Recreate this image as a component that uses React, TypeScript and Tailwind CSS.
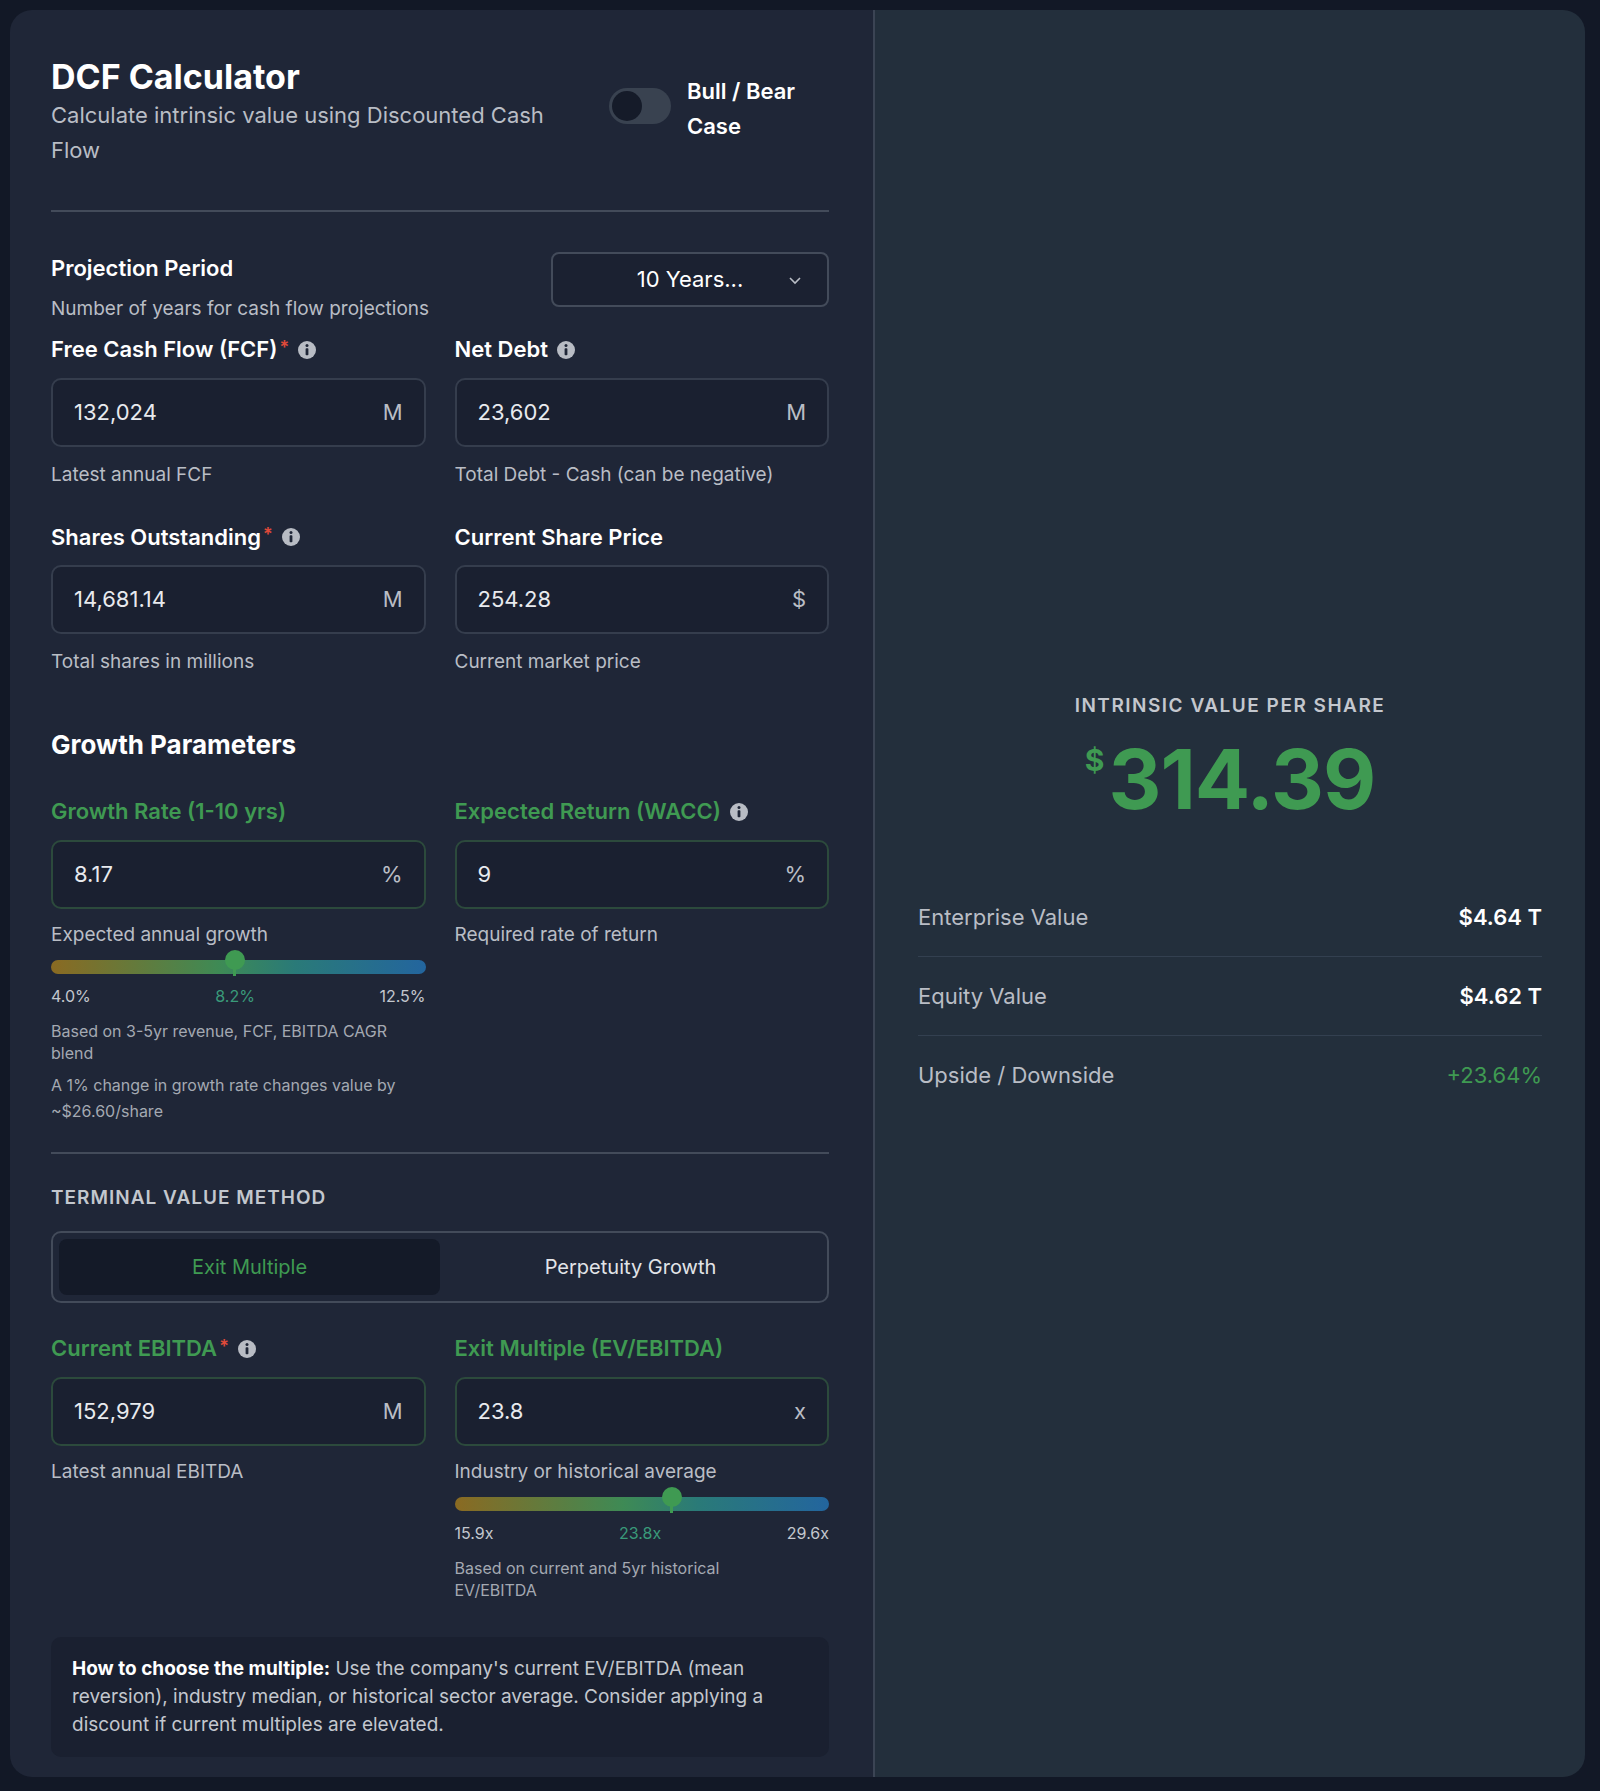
import React from "react";

const Info = () => (
  <svg width="20" height="20" viewBox="0 0 20 20" className="inline-block">
    <circle cx="10" cy="10" r="9" fill="#b8bcc4" />
    <circle cx="10" cy="5.6" r="1.5" fill="#1f2637" />
    <rect x="8.6" y="8.3" width="2.8" height="7" rx="0.8" fill="#1f2637" />
  </svg>
);

const Input = ({ v, u, green }: { v: string; u: string; green?: boolean }) => (
  <div
    className={`h-[69px] rounded-[10px] border-2 ${green ? "border-[#2c4a3c]" : "border-[#353d4d]"} bg-[#1a2030] flex items-center justify-between px-[21px] text-[22px] text-[#e8eaee]`}
  >
    <span>{v}</span>
    <span className="text-[#b9bdc5]">{u}</span>
  </div>
);

const Label = ({ children, green }: { children: React.ReactNode; green?: boolean }) => (
  <div className={`flex items-center gap-2 text-[22px] font-semibold h-[36px] ${green ? "text-[#3f9a52]" : "text-white"}`}>{children}</div>
);

const Req = () => <span className="text-[#e04a3a] -ml-1.5 self-start mt-0.5 text-[18px]">*</span>;

const Slider = ({ pos, a, b, c }: { pos: number; a: string; b: string; c: string }) => (
  <div className="mt-[11px]">
    <div className="relative h-[14px] rounded-full bg-[linear-gradient(90deg,#8a6a22,#3e8a55_45%,#2a7a78_65%,#23659e)]">
      <div className="absolute top-[-10px] w-[20px] h-[20px] -ml-[10px] rounded-full bg-[#3f9a52]" style={{ left: `${pos}%` }} />
      <div className="absolute top-[6px] w-[3px] h-[10px] -ml-[1.5px] bg-[#3f9a52]" style={{ left: `${pos}%` }} />
    </div>
    <div className="flex justify-between text-[16px] mt-[10px] text-[#c3c7ce]">
      <span>{a}</span>
      <span className="text-[#3a9a7a]">{b}</span>
      <span>{c}</span>
    </div>
  </div>
);

export default function App() {
  return (
    <div className="min-h-[1791px] bg-[#121826] p-[10px] pr-[15px] font-[family-name:Inter,sans-serif]">
      <div className="flex rounded-[22px] overflow-hidden h-[1767px]">
        <div className="w-[865px] bg-[#1f2637] pl-[41px] pr-[44px] pt-[46px] border-r-2 border-[#3b4454]">
          <div className="flex justify-between">
            <div className="w-[545px]">
              <h1 className="text-[34px] font-bold text-white leading-[42px]">DCF Calculator</h1>
              <p className="text-[22px] text-[#b9bdc5] leading-[35px] w-[535px]">Calculate intrinsic value using Discounted Cash<br />Flow</p>
            </div>
            <div className="flex items-start gap-4 w-[220px] mt-[30px]">
              <div className="w-[62px] h-[36px] rounded-full bg-[#394250] flex items-center px-[3px] mt-[2px] shrink-0">
                <div className="w-[30px] h-[30px] rounded-full bg-[#151b29]" />
              </div>
              <span className="text-[22px] font-semibold text-white leading-[35px] -mt-[12px]">Bull / Bear<br />Case</span>
            </div>
          </div>
          <div className="h-[2px] bg-[#434b5a] mt-[42px]" />
          <div className="flex justify-between mt-[40px]">
            <div>
              <div className="text-[22px] font-semibold text-white">Projection Period</div>
              <div className="text-[19px] text-[#b9bdc5] mt-[10px]">Number of years for cash flow projections</div>
            </div>
            <div className="w-[278px] h-[55px] rounded-[8px] border-2 border-[#434b5a] bg-[#1b2131] flex items-center justify-center relative text-[22px] text-white">
              10 Years...
              <svg className="absolute right-[24px]" width="16" height="16" viewBox="0 0 16 16" fill="none" stroke="#b9bdc5" strokeWidth="1.6"><path d="M3 6l5 5 5-5" /></svg>
            </div>
          </div>
          <div className="grid grid-cols-2 gap-x-[29px] mt-[8px]">
            <div>
              <Label>Free Cash Flow (FCF)<Req /><Info /></Label>
              <div className="mt-[10px]"><Input v="132,024" u="M" /></div>
              <div className="text-[19px] text-[#b9bdc5] mt-[14px]">Latest annual FCF</div>
            </div>
            <div>
              <Label>Net Debt<Info /></Label>
              <div className="mt-[10px]"><Input v="23,602" u="M" /></div>
              <div className="text-[19px] text-[#b9bdc5] mt-[14px]">Total Debt - Cash (can be negative)</div>
            </div>
            <div className="mt-[30px]">
              <Label>Shares Outstanding<Req /><Info /></Label>
              <div className="mt-[10px]"><Input v="14,681.14" u="M" /></div>
              <div className="text-[19px] text-[#b9bdc5] mt-[14px]">Total shares in millions</div>
            </div>
            <div className="mt-[30px]">
              <Label>Current Share Price</Label>
              <div className="mt-[10px]"><Input v="254.28" u="$" /></div>
              <div className="text-[19px] text-[#b9bdc5] mt-[14px]">Current market price</div>
            </div>
          </div>
          <h2 className="text-[26px] font-bold text-white mt-[48px]">Growth Parameters</h2>
          <div className="grid grid-cols-2 gap-x-[29px] mt-[30px]">
            <div>
              <Label green>Growth Rate (1-10 yrs)</Label>
              <div className="mt-[10px]"><Input v="8.17" u="%" green /></div>
              <div className="text-[19px] text-[#b9bdc5] mt-[12px]">Expected annual growth</div>
              <Slider pos={49} a="4.0%" b="8.2%" c="12.5%" />
              <div className="text-[16px] text-[#a4a9b2] mt-[12px] leading-[22px]">Based on 3-5yr revenue, FCF, EBITDA CAGR blend</div>
              <div className="text-[16px] text-[#a4a9b2] mt-[8px] leading-[26px]">A 1% change in growth rate changes value by ~$26.60/share</div>
            </div>
            <div>
              <Label green>Expected Return (WACC)<Info /></Label>
              <div className="mt-[10px]"><Input v="9" u="%" green /></div>
              <div className="text-[19px] text-[#b9bdc5] mt-[12px]">Required rate of return</div>
            </div>
          </div>
          <div className="h-[2px] bg-[#434b5a] mt-[28px]" />
          <div className="text-[19px] font-semibold tracking-[1px] text-[#c3c7ce] mt-[30px]">TERMINAL VALUE METHOD</div>
          <div className="mt-[18px] h-[72px] rounded-[10px] border-2 border-[#434b5a] p-[6px] flex text-[20px]">
            <div className="flex-1 rounded-[8px] bg-[#141a28] flex items-center justify-center text-[#3f9a52]">Exit Multiple</div>
            <div className="flex-1 flex items-center justify-center text-[#e2e4e8]">Perpetuity Growth</div>
          </div>
          <div className="grid grid-cols-2 gap-x-[29px] mt-[28px]">
            <div>
              <Label green>Current EBITDA<Req /><Info /></Label>
              <div className="mt-[10px]"><Input v="152,979" u="M" green /></div>
              <div className="text-[19px] text-[#b9bdc5] mt-[12px]">Latest annual EBITDA</div>
            </div>
            <div>
              <Label green>Exit Multiple (EV/EBITDA)</Label>
              <div className="mt-[10px]"><Input v="23.8" u="x" green /></div>
              <div className="text-[19px] text-[#b9bdc5] mt-[12px]">Industry or historical average</div>
              <Slider pos={58} a="15.9x" b="23.8x" c="29.6x" />
              <div className="text-[16px] text-[#a4a9b2] mt-[12px] leading-[22px] pr-[70px]">Based on current and 5yr historical EV/EBITDA</div>
            </div>
          </div>
          <div className="mt-[36px] rounded-[10px] bg-[#1a2030] px-[21px] py-[18px] text-[19px] leading-[28px] text-[#c3c7ce]">
            <span className="font-bold text-white">How to choose the multiple:</span> Use the company's current EV/EBITDA (mean reversion), industry median, or historical sector average. Consider applying a discount if current multiples are elevated.
          </div>
        </div>
        <div className="flex-1 bg-[#232f3c] px-[43px] flex flex-col justify-center pt-[20px]">
          <div className="text-center text-[19px] font-semibold tracking-[1.5px] text-[#c3c7ce]">INTRINSIC VALUE PER SHARE</div>
          <div className="flex justify-center items-start mt-[10px] text-[#3f9a52] font-bold">
            <span className="text-[30px] mt-[8px] mr-[4px]">$</span>
            <span className="text-[82px] leading-[100px] tracking-[-1px]">314.39</span>
          </div>
          <div className="mt-[48px]">
            {[["Enterprise Value", "$4.64 T", "text-white font-semibold"], ["Equity Value", "$4.62 T", "text-white font-semibold"], ["Upside / Downside", "+23.64%", "text-[#3f9a52]"]].map(([l, v, c], i) => (
              <div key={l} className={`flex justify-between items-center h-[79px] text-[22px] ${i < 2 ? "border-b border-[#334050]" : ""}`}>
                <span className="text-[#b9bdc5]">{l}</span>
                <span className={c}>{v}</span>
              </div>
            ))}
          </div>
        </div>
      </div>
    </div>
  );
}
